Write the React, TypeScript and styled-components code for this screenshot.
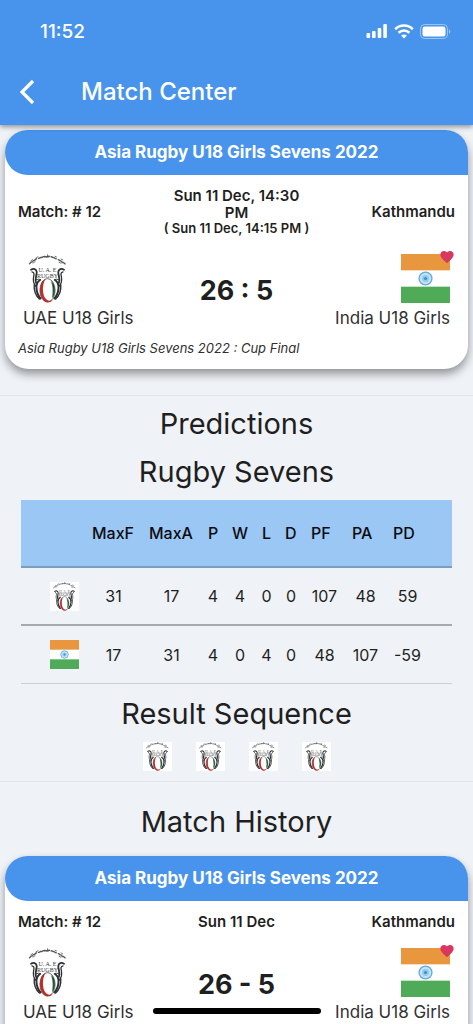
import React from "react";
import styled, { createGlobalStyle } from "styled-components";
import { MdFavorite } from "react-icons/md";

const GlobalStyle = createGlobalStyle`
  *, *::before, *::after { box-sizing: border-box; }
  body {
    margin: 0;
    background: #eff3f8;
    color: #1f1f21;
    font-family: Inter, "Liberation Sans", sans-serif;
  }
`;

const Screen = styled.div`
  display: flex;
  flex-direction: column;
  height: 100vh;
  overflow: hidden;
`;

const TopBar = styled.header`
  position: relative;
  z-index: 1;
  flex: none;
  color: #fff;
  background: #4894ed;
  box-shadow: 0 2px 5px rgba(0, 0, 0, 0.4);
`;

const StatusBar = styled.div`
  display: flex;
  align-items: center;
  justify-content: space-between;
  height: 58px;
  padding: 4px 22px 0 40px;
  font-size: 19px;
  font-weight: 500;
`;

const StatusIcons = styled.div`
  display: flex;
  align-items: center;
  gap: 6px;
  svg { display: block; }
`;

const NavBar = styled.div`
  display: flex;
  align-items: center;
  gap: 30px;
  height: 67px;
  padding: 0 12px;
`;

const BackButton = styled.button`
  display: grid;
  place-items: center;
  width: 39px;
  height: 48px;
  padding: 0 9px 0 0;
  color: inherit;
  background: none;
  border: 0;
`;

const Title = styled.h1`
  margin: 0;
  font-size: 24px;
  font-weight: 500;
`;

const Content = styled.main`
  flex: 1;
  min-height: 0;
  overflow-y: auto;
  scrollbar-width: none;
`;

const Section = styled.section`
  padding: 5px 0 26px;
  border-bottom: 1px solid #e2e6eb;
`;

const Stats = styled.section`
  padding: 8px 21px;
  border-bottom: 1px solid #e2e6eb;
`;

const History = styled.section`
  padding: 20px 0 24px;
`;

const Heading = styled.h2`
  margin: 0 0 8px;
  font-size: 29px;
  line-height: 40px;
  font-weight: 400;
  text-align: center;
`;

const SequenceHeading = styled(Heading)`
  margin-top: 10px;
`;

const HistoryHeading = styled(Heading)`
  margin-bottom: 14px;
`;

const Card = styled.article`
  margin: 0 5px;
  background: #fff;
  border-radius: 24px;
  box-shadow: 0 5px 10px rgba(0, 0, 0, 0.4);
`;

const CardHeader = styled.h3`
  margin: 0;
  color: #fff;
  background: #4894ed;
  border-radius: 24px 24px 0 24px;
  font-size: 17px;
  line-height: 45px;
  font-weight: 700;
  text-align: center;
`;

const CardBody = styled.div`
  padding: 12px 13px;
`;

const MetaRow = styled.div`
  display: grid;
  grid-template-columns: 1fr 1fr 1fr;
  align-items: center;
  font-size: 15px;
  line-height: 17px;
  font-weight: 600;
`;

const Meta = styled.div<{ $align: "left" | "center" | "right" }>`
  text-align: ${(p) => p.$align};
`;

const LocalTime = styled.div`
  font-size: 13px;
  line-height: 15px;
  white-space: nowrap;
`;

const TeamsRow = styled.div`
  display: grid;
  grid-template-columns: 1fr auto 1fr;
  align-items: center;
  padding: 18px 5px 0;
`;

const Team = styled.div<{ $end?: boolean }>`
  display: flex;
  flex-direction: column;
  align-items: ${(p) => (p.$end ? "flex-end" : "flex-start")};
  gap: 5px;
  color: #303032;
  font-size: 17px;
  line-height: 20px;
  white-space: nowrap;
`;

const Badge = styled.div`
  position: relative;
  svg { display: block; }
`;

const Favorite = styled(MdFavorite)`
  position: absolute;
  top: -5px;
  right: -5px;
  color: #d9375f;
`;

const Score = styled.div`
  font-size: 27px;
  line-height: 32px;
  font-weight: 700;
`;

const Stage = styled.p`
  margin: 12px 0 0;
  color: #303032;
  font-size: 13px;
  line-height: 17px;
  font-style: italic;
`;

const Table = styled.table`
  width: 100%;
  table-layout: fixed;
  border-collapse: separate;
  border-spacing: 0;
  font-size: 16px;
  svg { display: block; margin: 0 auto; }
`;

const Th = styled.th`
  height: 68px;
  padding: 0 7px;
  color: #0b0c0e;
  background: #9bc7f5;
  border-bottom: 2px solid #7d9dbe;
  font-weight: 500;
  text-align: left;
`;

const Td = styled.td<{ $last?: boolean }>`
  height: 58px;
  padding: 0;
  border-bottom: ${(p) => (p.$last ? "1px solid #cbd0d4" : "2px solid #a6a9ad")};
  text-align: center;
  &:first-child { padding-left: 23px; }
  &:last-child { padding-right: 23px; }
`;

const Sequence = styled.ul`
  display: flex;
  justify-content: center;
  gap: 24px;
  margin: 0;
  padding: 0 0 2px;
  list-style: none;
  svg { display: block; }
`;

const HomeIndicator = styled.div`
  position: fixed;
  left: 50%;
  bottom: 10px;
  width: 168px;
  height: 6px;
  border-radius: 3px;
  background: #000;
  transform: translateX(-50%);
`;

function UaeCrest({ size }: { size: number }) {
  return (
    <svg width={size} height={size} viewBox="0 0 49 49" role="img" aria-label="UAE">
      <rect width="49" height="49" fill="#fff" />
      <g fill="none" stroke="#55585b" strokeLinecap="round">
        <path strokeWidth="1.400" d="M6.400 9.800c1-.5 1.400-2.300 2.400-1.800s1.100-1.900 2.200-1.600 1.300-1.700 2.400-1.400M15.400 4.400c1.200.2 1.400-1.300 2.600-.9s1.600-1.200 2.800-.8M28 2.800c1.200-.4 1.500 1 2.700.8s1.300 1.200 2.500 1.100M35.200 5.600c1.200 0 1.300 1.400 2.400 1.300s1 1.800 2.300 1.600 1.200 1.200 2.200 1.400" />
        <path strokeWidth="1.600" d="M21.500 2.600c1.500-.2 2.400.9 4.800-.3" />
        <path strokeWidth=".8" d="M8 6.600l1.600-1M13 3.800l2-1M24.500.7v1.600M32 2.300l1.500.6M38 5l1.800.9M10 9l2-1.200M36 8.300l2 1" />
      </g>
      <g fontFamily="Liberation Serif, serif" fontWeight="400" fill="#36393c" textAnchor="middle">
        <text x="24.500" y="18.300" fontSize="6">U. A. E</text>
        <text x="24.500" y="23.600" fontSize="6">RUGBY</text>
      </g>
      <g fill="none" stroke="#2f3235" strokeLinecap="round">
        <path strokeWidth="1.800" d="M8 15.800c2.500-1.600 5.300-.8 5.700 2 .3 3-2.200 6.800-.6 11.200M41 15.800c-2.500-1.600-5.300-.8-5.700 2-.3 3 2.200 6.800.6 11.200" />
        <path strokeWidth="1.300" d="M9 17.800c2.300.4 2.200 2.400 1.700 4.600-.8 3.600-.4 7.400 2.400 10M40 17.800c-2.300.4-2.200 2.400-1.700 4.600.8 3.600.4 7.400-2.400 10" />
        <path strokeWidth="2" d="M17 26c-5 3-4.600 12.500.6 18.500M32 26c5 3 4.600 12.500-.6 18.500" />
        <path strokeWidth="1.400" d="M11.200 31c-.4 6 1.200 10.300 5.200 14M37.800 31c.4 6-1.200 10.300-5.200 14" />
        <path strokeWidth=".9" d="M12.600 26c2-1 4-1 5.200-.3M36.400 26c-2-1-4-1-5.200-.3" />
      </g>
      <ellipse cx="24.500" cy="36.300" rx="7.600" ry="11.700" fill="#fff" stroke="#4a4d50" strokeWidth=".8" />
      <path d="M22.500 25c-7.400 2.600-7.600 20 1 23.200 2.200.4 5 .1 6.300-2.500-3.500 2-6.300.8-8-2.200-2.500-4.500-2.600-13.200.7-18.500z" fill="#bf2d28" />
      <path d="M27.500 26.200c4.800 3.800 5.500 13.400 1.300 18.300 1.200-5.800 1.300-12.600-1.300-18.300z" fill="#2f8a45" />
      <path d="M29 27.600c3.300 4 3.600 11.800.8 16.100 1-5.400.8-11-.8-16.100z" fill="#26382b" />
    </svg>
  );
}

function IndiaFlag({ size }: { size: number }) {
  return (
    <svg width={size} height={size} viewBox="0 0 48 48" role="img" aria-label="India">
      <rect width="48" height="48" fill="#fff" />
      <rect width="48" height="16" fill="#e8973f" />
      <rect y="32" width="48" height="16" fill="#4fab58" />
      <circle cx="24" cy="24" r="6.300" fill="#c5e2f4" stroke="#5eaddd" strokeWidth="1.300" />
      <circle cx="24" cy="24" r="3.400" fill="#91c9ea" />
      <circle cx="24" cy="24" r="1.500" fill="#3990cc" />
    </svg>
  );
}

function StatusGlyphs() {
  return (
    <StatusIcons>
      <svg width="22" height="14" viewBox="0 0 22 14" fill="#fff" aria-hidden="true">
        <rect x="0.500" y="9" width="3.600" height="5" rx="1" />
        <rect x="6" y="7" width="3.600" height="7" rx="1" />
        <rect x="11.700" y="4" width="3.600" height="10" rx="1" />
        <rect x="17.300" y="0" width="3.600" height="14" rx="1" />
      </svg>
      <svg width="20" height="15" viewBox="0 0 20 15" fill="none" stroke="#fff" strokeWidth="2.600" aria-hidden="true">
        <path d="M1.200 5.200c5-4.900 12.600-4.900 17.600 0M4.600 8.700c3.100-3 7.700-3 10.800 0" />
        <path d="M10 14.500l-2.900-3c1.600-1.500 4.200-1.500 5.800 0z" fill="#fff" stroke="none" />
      </svg>
      <svg width="31" height="15" viewBox="0 0 31 15" aria-hidden="true">
        <rect x=".5" y=".5" width="27" height="14" rx="4" fill="none" stroke="#fff" strokeOpacity=".45" />
        <rect x="2.500" y="2.500" width="23" height="10" rx="2.300" fill="#fff" />
        <path d="M29 5.300c1.800.7 1.800 3.700 0 4.400z" fill="#fff" fillOpacity=".5" />
      </svg>
    </StatusIcons>
  );
}

type MatchProps = {
  date: string;
  localTime?: string;
  score: string;
};

function MatchCard({ date, localTime, score }: MatchProps) {
  return (
    <Card>
      <CardHeader>Asia Rugby U18 Girls Sevens 2022</CardHeader>
      <CardBody>
        <MetaRow>
          <Meta $align="left">Match: # 12</Meta>
          <Meta $align="center">
            {date}
            {localTime && <LocalTime>{localTime}</LocalTime>}
          </Meta>
          <Meta $align="right">Kathmandu</Meta>
        </MetaRow>
        <TeamsRow>
          <Team>
            <Badge><UaeCrest size={49} /></Badge>
            <span>UAE U18 Girls</span>
          </Team>
          <Score>{score}</Score>
          <Team $end>
            <Badge>
              <IndiaFlag size={49} />
              <Favorite size={16} />
            </Badge>
            <span>India U18 Girls</span>
          </Team>
        </TeamsRow>
        <Stage>Asia Rugby U18 Girls Sevens 2022 : Cup Final</Stage>
      </CardBody>
    </Card>
  );
}

const columns = [
  { label: "", width: 64 },
  { label: "MaxF", width: 57 },
  { label: "MaxA", width: 59 },
  { label: "P", width: 24 },
  { label: "W", width: 30 },
  { label: "L", width: 23 },
  { label: "D", width: 26 },
  { label: "PF", width: 41 },
  { label: "PA", width: 41 },
  { label: "PD", width: 66 },
];

const rows = [
  { team: "uae", values: [31, 17, 4, 4, 0, 0, 107, 48, 59] },
  { team: "india", values: [17, 31, 4, 0, 4, 0, 48, 107, -59] },
];

export default function App() {
  return (
    <Screen>
      <GlobalStyle />
      <TopBar>
        <StatusBar>
          <span>11:52</span>
          <StatusGlyphs />
        </StatusBar>
        <NavBar>
          <BackButton type="button" aria-label="Back">
            <svg width="16" height="26" viewBox="0 0 16 26" fill="none" stroke="currentColor" strokeWidth="3.200">
              <path d="M14 2L3 13l11 11" />
            </svg>
          </BackButton>
          <Title>Match Center</Title>
        </NavBar>
      </TopBar>
      <Content>
        <Section>
          <MatchCard date="Sun 11 Dec, 14:30 PM" localTime="( Sun 11 Dec, 14:15 PM )" score="26 : 5" />
        </Section>
        <Stats>
          <Heading>Predictions</Heading>
          <Heading>Rugby Sevens</Heading>
          <Table>
            <colgroup>
              {columns.map((c, i) => <col key={i} width={c.width} />)}
            </colgroup>
            <thead>
              <tr>{columns.map((c, i) => <Th key={i} scope="col">{c.label}</Th>)}</tr>
            </thead>
            <tbody>
              {rows.map((row, i) => (
                <tr key={row.team}>
                  <Td $last={i === rows.length - 1}>
                    {row.team === "uae" ? <UaeCrest size={29} /> : <IndiaFlag size={29} />}
                  </Td>
                  {row.values.map((v, j) => <Td key={j} $last={i === rows.length - 1}>{v}</Td>)}
                </tr>
              ))}
            </tbody>
          </Table>
          <SequenceHeading>Result Sequence</SequenceHeading>
          <Sequence>
            {[0, 1, 2, 3].map((n) => <li key={n}><UaeCrest size={29} /></li>)}
          </Sequence>
        </Stats>
        <History>
          <HistoryHeading>Match History</HistoryHeading>
          <MatchCard date="Sun 11 Dec" score="26 - 5" />
        </History>
      </Content>
      <HomeIndicator />
    </Screen>
  );
}
